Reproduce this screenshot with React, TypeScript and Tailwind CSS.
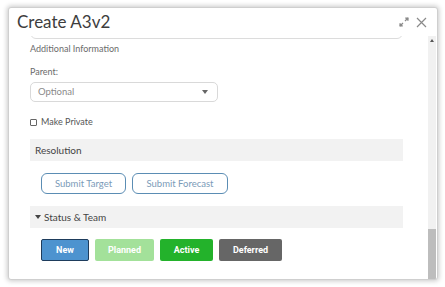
import React from "react";

const font = { fontFamily: "Lato, 'Noto Sans', sans-serif" };

function ExpandIcon() {
  return (
    <svg width="10" height="10" viewBox="0 0 10 10" fill="none" stroke="#8a8a8a" strokeWidth="1.2">
      <path d="M6 4 L9 1" />
      <path d="M6.2 1 H9 V3.8" fill="#8a8a8a" />
      <path d="M4 6 L1 9" />
      <path d="M1 6.2 V9 H3.8" fill="#8a8a8a" />
    </svg>
  );
}

function CloseIcon() {
  return (
    <svg width="11" height="11" viewBox="0 0 11 11" fill="none" stroke="#8a8a8a" strokeWidth="1.2">
      <path d="M1 1 L10 10 M10 1 L1 10" />
    </svg>
  );
}

const statuses = [
  { label: "New", cls: "w-[48px] bg-[#4d93cf] border border-[#1e3c5c]" },
  { label: "Planned", cls: "w-[59px] bg-[#a3e19a]" },
  { label: "Active", cls: "w-[53px] bg-[#23b22b]" },
  { label: "Deferred", cls: "w-[63px] bg-[#666666]" },
];

export default function App() {
  return (
    <div className="w-[445px] h-[287px] bg-white overflow-hidden" style={font}>
      <div className="ml-[8px] mt-[7px] w-[430px] h-[273px] bg-white border border-[#cfcfcf] rounded-[3px] shadow-[0_0_5px_1px_rgba(0,0,0,0.22)] flex flex-col overflow-hidden">
        {/* Header */}
        <div className="h-[28px] shrink-0 flex items-center justify-between pl-[8px] pr-[10px]">
          <h1 className="text-[17px] leading-[20px] text-[#3d3d3d]">Create A3v2</h1>
          <div className="flex items-center gap-[7px]">
            <ExpandIcon />
            <CloseIcon />
          </div>
        </div>

        {/* Body */}
        <div className="flex flex-1 min-h-0 overflow-hidden">
          <div className="w-[394px] pl-[21px] flex flex-col text-[9px] leading-[14px]">
            <div className="h-[13px] -mt-[10px] border border-[#dcdcdc] rounded-[6px] shrink-0" />

            <div className="mt-[3px] text-[#6b6b6b]">Additional Information</div>

            <div className="mt-[9px] text-[#6b6b6b]">Parent:</div>
            <div className="mt-[3px] w-[188px] h-[20px] border border-[#d9d9d9] rounded-[5px] flex items-center justify-between pl-[7px] pr-[9px] text-[9.5px] text-[#8a8a8a]">
              <span>Optional</span>
              <span className="w-0 h-0 border-l-[3.5px] border-r-[3.5px] border-t-[4px] border-l-transparent border-r-transparent border-t-[#666]" />
            </div>

            <label className="mt-[13px] flex items-center gap-[4px] text-[#555]">
              <span className="w-[7px] h-[7px] border border-[#666] rounded-[1px]" />
              <span>Make Private</span>
            </label>

            <div className="mt-[10px] h-[22px] bg-[#f2f2f2] flex items-center pl-[5px] text-[10px] text-[#444]">
              Resolution
            </div>

            <div className="mt-[12px] ml-[11px] flex gap-[6px]">
              <button className="w-[85px] h-[21px] border border-[#5b8db4] rounded-[6px] text-[9.5px] text-[#7b9bb8]">
                Submit Target
              </button>
              <button className="w-[96px] h-[21px] border border-[#5b8db4] rounded-[6px] text-[9.5px] text-[#7b9bb8]">
                Submit Forecast
              </button>
            </div>

            <div className="mt-[12px] h-[22px] bg-[#f2f2f2] flex items-center pl-[5px] gap-[3px] text-[10px] text-[#444]">
              <span className="w-0 h-0 border-l-[3px] border-r-[3px] border-t-[4px] border-l-transparent border-r-transparent border-t-[#444]" />
              <span>Status &amp; Team</span>
            </div>

            <div className="mt-[11px] ml-[11px] flex gap-[6px]">
              {statuses.map((s) => (
                <button
                  key={s.label}
                  className={`h-[22px] ${s.cls} rounded-[2px] text-white text-[9px] font-bold`}
                  style={{ fontFamily: "Roboto, 'Liberation Sans', sans-serif" }}
                >
                  {s.label}
                </button>
              ))}
            </div>
          </div>

          <div className="flex-1" />

          {/* Scrollbar */}
          <div className="w-[8px] mr-[1px] bg-[#f1f1f1] flex flex-col">
            <div className="h-[8px] flex items-center justify-center">
              <span className="w-0 h-0 border-l-[2px] border-r-[2px] border-b-[3px] border-l-transparent border-r-transparent border-b-[#555]" />
            </div>
            <div className="flex-1" />
            <div className="h-[50px] bg-[#bdbdbd]" />
          </div>
        </div>
      </div>
    </div>
  );
}
